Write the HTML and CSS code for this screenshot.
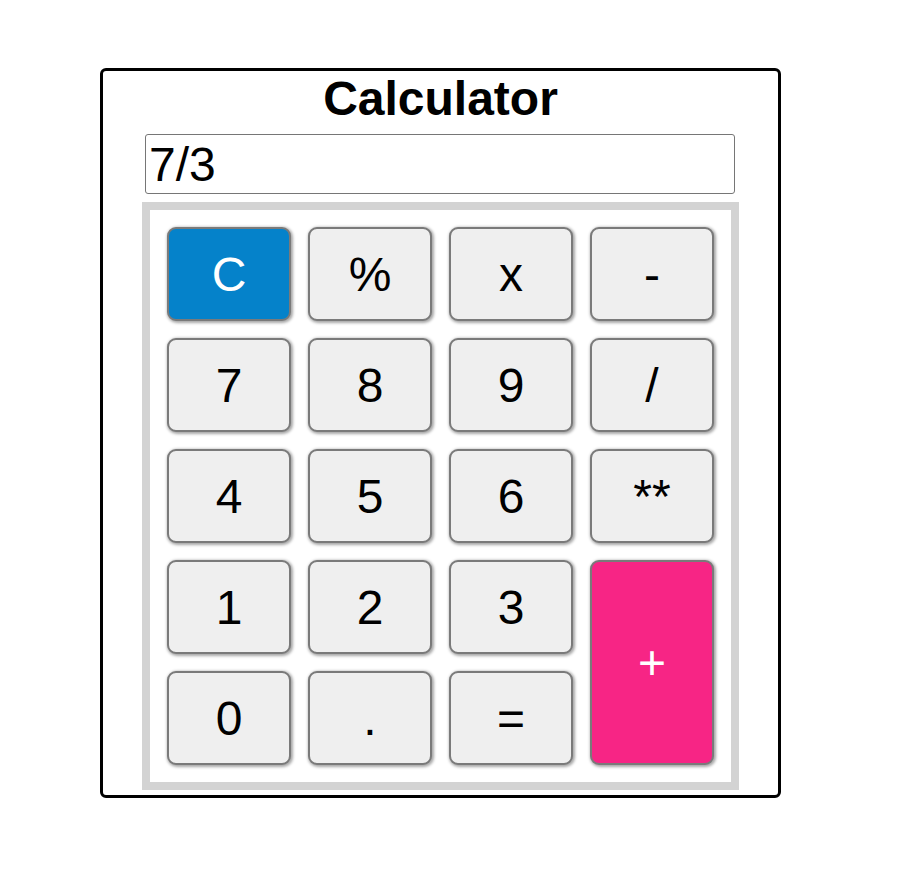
FILE: index.html
```html
<!DOCTYPE html>
<html>
<head>
<meta charset="utf-8">
<link rel="stylesheet" href="styles.css">
</head>
<body>
<div class="calculator">
  <h1 class="title">Calculator</h1>
  <input class="display" type="text" value="7/3">
  <div class="keypad">
    <button class="key key-clear">C</button>
    <button class="key">%</button>
    <button class="key">x</button>
    <button class="key">-</button>
    <button class="key">7</button>
    <button class="key">8</button>
    <button class="key">9</button>
    <button class="key">/</button>
    <button class="key">4</button>
    <button class="key">5</button>
    <button class="key">6</button>
    <button class="key">**</button>
    <button class="key">1</button>
    <button class="key">2</button>
    <button class="key">3</button>
    <button class="key key-plus">+</button>
    <button class="key">0</button>
    <button class="key">.</button>
    <button class="key">=</button>
  </div>
</div>
</body>
</html>
```
FILE: styles.css
```css
html, body {
  background: #ffffff;
}
body {
  margin: 8px;
  font-family: "Liberation Sans", Arial, sans-serif;
}
.calculator {
  box-sizing: border-box;
  width: 681px;
  height: 730px;
  margin: 60px 0 0 92px;
  border: 3px solid #000;
  border-radius: 6px;
  display: flex;
  flex-direction: column;
  align-items: center;
}
.title {
  margin: 0;
  font-size: 48px;
  line-height: 55px;
  font-weight: bold;
  color: #000;
}
.display {
  box-sizing: border-box;
  width: 590px;
  height: 60px;
  margin: 8px 1px 8px 0;
  padding: 1px 3px;
  border: 1px solid #767676;
  border-radius: 3px;
  font-family: "Liberation Sans", Arial, sans-serif;
  font-size: 48px;
  color: #000;
  background: #fff;
  outline: none;
}
.keypad {
  box-sizing: border-box;
  width: 597px;
  border: 8px solid #d3d3d3;
  padding: 17px;
  display: grid;
  grid-template-columns: repeat(4, 124px);
  grid-auto-rows: 94px;
  gap: 17px;
  background: #fff;
}
.key {
  box-sizing: border-box;
  border: 2px solid #7a7a7a;
  border-radius: 9px;
  background: #efefef;
  color: #000;
  font-family: "Liberation Sans", Arial, sans-serif;
  font-size: 48px;
  padding: 0;
  box-shadow: 1px 1px 3px 1px rgba(0, 0, 0, 0.35);
}
.key-clear {
  background: #0582ca;
  color: #fff;
}
.key-plus {
  grid-column: 4;
  grid-row: 4 / span 2;
  background: #f72585;
  color: #fff;
}
```
